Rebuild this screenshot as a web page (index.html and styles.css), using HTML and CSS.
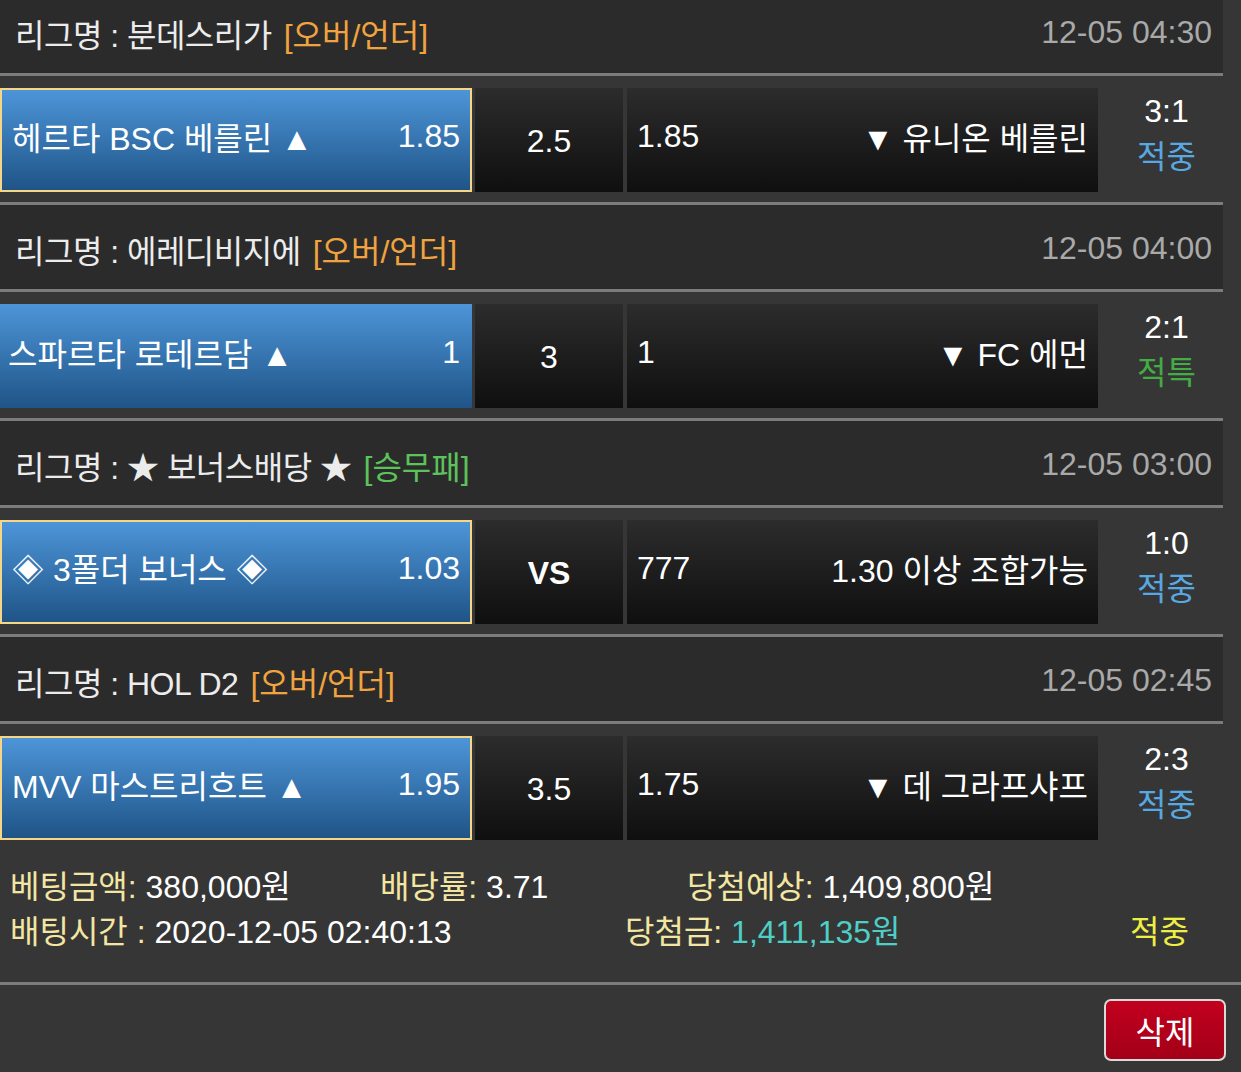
FILE: index.html
```html
<!DOCTYPE html>
<html lang="ko">
<head>
    <meta charset="UTF-8">
    <meta name="viewport" content="width=device-width, initial-scale=1.0">
    <title>베팅내역</title>
    <link rel="stylesheet" href="styles.css">
</head>
<body>
    <div class="bet-list">
        <div class="league first">
            <div class="league-head">
                <span class="league-name">리그명 : 분데스리가</span>
                <span class="tag orange">[오버/언더]</span>
                <span class="league-date">12-05 04:30</span>
            </div>
            <div class="match">
                <div class="home selected"><span>헤르타 BSC 베를린 ▲</span><span>1.85</span></div>
                <div class="mid">2.5</div>
                <div class="away"><span>1.85</span><span>▼ 유니온 베를린</span></div>
                <div class="score">3:1<span class="res blue">적중</span></div>
            </div>
        </div>

        <div class="league">
            <div class="league-head">
                <span class="league-name">리그명 : 에레디비지에</span>
                <span class="tag orange">[오버/언더]</span>
                <span class="league-date">12-05 04:00</span>
            </div>
            <div class="match">
                <div class="home"><span>스파르타 로테르담 ▲</span><span>1</span></div>
                <div class="mid">3</div>
                <div class="away"><span>1</span><span>▼ FC 에먼</span></div>
                <div class="score">2:1<span class="res green">적특</span></div>
            </div>
        </div>

        <div class="league">
            <div class="league-head">
                <span class="league-name">리그명 : ★ 보너스배당 ★</span>
                <span class="tag green">[승무패]</span>
                <span class="league-date">12-05 03:00</span>
            </div>
            <div class="match">
                <div class="home selected"><span>◈ 3폴더 보너스 ◈</span><span>1.03</span></div>
                <div class="mid vs">VS</div>
                <div class="away"><span>777</span><span>1.30 이상 조합가능</span></div>
                <div class="score">1:0<span class="res blue">적중</span></div>
            </div>
        </div>

        <div class="league">
            <div class="league-head">
                <span class="league-name">리그명 : HOL D2</span>
                <span class="tag orange">[오버/언더]</span>
                <span class="league-date">12-05 02:45</span>
            </div>
            <div class="match">
                <div class="home selected"><span>MVV 마스트리흐트 ▲</span><span>1.95</span></div>
                <div class="mid">3.5</div>
                <div class="away"><span>1.75</span><span>▼ 데 그라프샤프</span></div>
                <div class="score">2:3<span class="res blue">적중</span></div>
            </div>
        </div>
    </div>

    <div class="bet-summary">
        <div class="sum-row row-one">
            <div><span class="lbl">베팅금액:</span> 380,000원</div>
            <div><span class="lbl">배당률:</span> 3.71</div>
            <div><span class="lbl">당첨예상:</span> 1,409,800원</div>
        </div>
        <div class="sum-row row-two">
            <div><span class="lbl">배팅시간 :</span> 2020-12-05 02:40:13</div>
            <div><span class="lbl">당첨금:</span> <span class="win">1,411,135원</span></div>
            <div class="hit">적중</div>
        </div>
    </div>

    <div class="actions">
        <button class="btn-delete">삭제</button>
    </div>
</body>
</html>
```

FILE: styles.css
```css
body { margin: 0; background: #363636; color: #f2f2f2; font-family: "Liberation Sans", "Noto Sans CJK KR", sans-serif; font-size: 32px; overflow: hidden; }

.bet-list { width: 1223px; margin-top: -11px; }
.league-head { display: flex; align-items: center; height: 84px; padding: 3px 11px 0 15px; box-sizing: border-box; background: #2b2b2b; border-top: 3px solid #7c7c7c; border-bottom: 3px solid #7c7c7c; }
.league-head { height: 90px; }
.league.first .league-head { border-top: none; height: 87px; }
.league-name { color: #ececec; letter-spacing: -0.5px; }
.tag { margin-left: 12px; }
.tag.orange { color: #f0a33e; }
.tag.green { color: #5cc25a; }
.league-date { margin-left: auto; color: #a9a9a9; }

.match { display: flex; height: 104px; margin: 12px 0 10px; }
.home { width: 472px; box-sizing: border-box; display: flex; align-items: center; justify-content: space-between; padding: 0 12px 8px 8px; background: linear-gradient(#4d95d8, #1f5487); color: #fff; }
.home.selected { border: 2px solid #f5d686; padding: 0 10px 8px 10px; }
.mid { width: 148px; margin-left: 3px; display: flex; align-items: center; justify-content: center; padding-top: 2px; box-sizing: border-box; background: linear-gradient(#2c2c2c, #0f0f0f); color: #fff; }
.mid.vs { font-weight: bold; }
.away { width: 471px; margin-left: 4px; box-sizing: border-box; display: flex; align-items: center; justify-content: space-between; padding: 0 10px 8px; background: linear-gradient(#2c2c2c, #0f0f0f); color: #fff; }
.score { flex: 1; display: flex; flex-direction: column; align-items: center; padding-left: 12px; line-height: 46px; color: #fff; }
.res.blue { color: #58a8e2; }
.res.green { color: #44ac44; }

.bet-summary { padding: 15px 0 27px 10px; border-bottom: 3px solid #7c7c7c; }
.sum-row { display: grid; line-height: 45px; color: #fff; }
.row-one { grid-template-columns: 370px 307px auto; }
.row-two { grid-template-columns: 615px 505px auto; }
.lbl { color: #f2e6a2; }
.win { color: #4ecfc6; }
.hit { color: #eeee44; }

.actions { display: flex; justify-content: flex-end; padding: 14px 15px 0 0; }
.btn-delete { width: 122px; height: 62px; border: 2px solid #d9d9d9; border-radius: 7px; background: linear-gradient(#c2001e, #a30018); color: #fff; font-family: "Liberation Sans", "Noto Sans CJK KR", sans-serif; font-size: 32px; }
```
